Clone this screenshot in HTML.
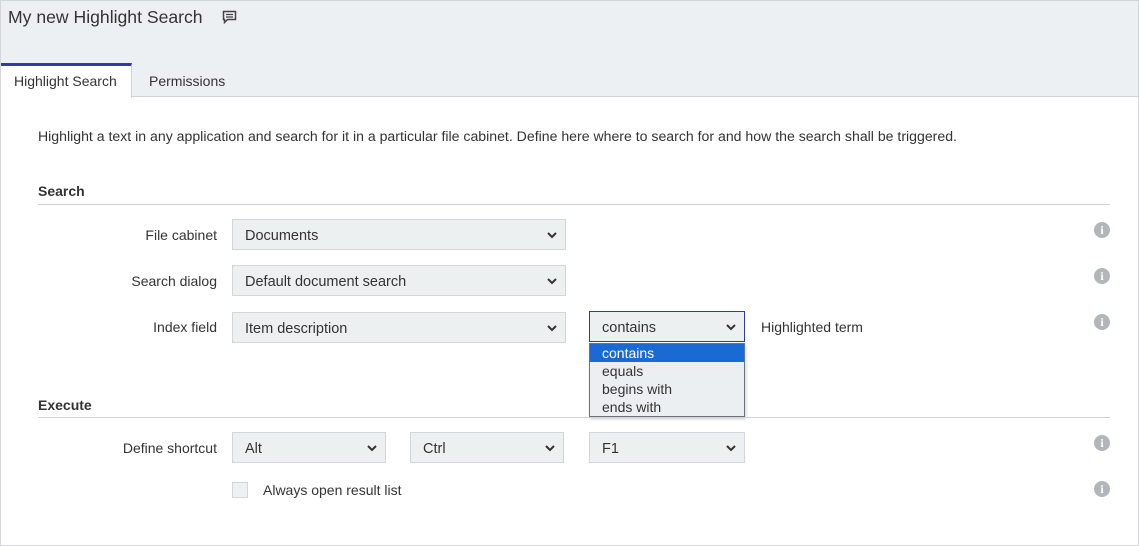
<!DOCTYPE html>
<html><head><style>
*{box-sizing:border-box;margin:0;padding:0}
body{width:1139px;height:546px;font-family:"Liberation Sans",sans-serif;font-size:14px;color:#333;background:#fff;position:relative;overflow:hidden}
.a{position:absolute}
.frame{left:0;top:0;width:1139px;height:546px;border:1px solid #d4d7da}
.hdr{left:1px;top:1px;width:1137px;height:96px;background:#edf0f2;border-bottom:1px solid #d0d4d8}
.sel{position:absolute;background:#edf0f1;border:1px solid #d2d6da;height:31px;padding-left:12px;line-height:33px;font-size:14.5px;color:#333}
.sel svg{position:absolute;right:8px;top:12px}
.lbl{position:absolute;text-align:right;width:217px;left:0;font-size:14px}
.info{position:absolute;left:1094px;width:16px;height:16px;border-radius:50%;background:#b2b6ba;color:#fff;font-weight:bold;font-size:12px;text-align:center;line-height:16px;font-family:"Liberation Serif",serif}
.line{position:absolute;left:38px;width:1072px;height:1px;background:#cfd3d6}
.h{position:absolute;left:38px;font-weight:bold;font-size:14px;color:#333}
</style></head><body>
<div class="a frame"></div>
<div class="a hdr"></div>
<div class="a" style="left:8px;top:7px;font-size:17.6px;color:#333">My new Highlight Search</div>
<svg class="a" style="left:222px;top:10px" width="16" height="14" viewBox="0 0 16 14"><path d="M1.5 1.5h12v8h-8l-3 3v-3h-1z" fill="none" stroke="#444" stroke-width="1.5"/><path d="M4 4.5h7M4 7h7" stroke="#444" stroke-width="1.2"/></svg>
<div class="a" style="left:1px;top:63px;width:131px;height:35px;background:#fff;border-top:3px solid #3438ad;border-right:1px solid #d0d4d8"></div>
<div class="a" style="left:14px;top:73px">Highlight Search</div>
<div class="a" style="left:149px;top:73px">Permissions</div>
<div class="a" style="left:38px;top:128px;font-size:14.1px">Highlight a text in any application and search for it in a particular file cabinet. Define here where to search for and how the search shall be triggered.</div>
<div class="h" style="top:183px">Search</div><div class="line" style="top:204px"></div>
<div class="lbl" style="top:227px">File cabinet</div>
<div class="sel" style="left:232px;top:219px;width:334px">Documents<svg width="10" height="7"><path d="M1 1l4 4 4-4" fill="none" stroke="#333" stroke-width="2"/></svg></div>
<div class="info" style="top:222px">i</div>
<div class="lbl" style="top:273px">Search dialog</div>
<div class="sel" style="left:232px;top:265px;width:334px">Default document search<svg width="10" height="7"><path d="M1 1l4 4 4-4" fill="none" stroke="#333" stroke-width="2"/></svg></div>
<div class="info" style="top:268px">i</div>
<div class="lbl" style="top:319px">Index field</div>
<div class="sel" style="left:232px;top:312px;width:334px">Item description<svg width="10" height="7"><path d="M1 1l4 4 4-4" fill="none" stroke="#333" stroke-width="2"/></svg></div>
<div class="sel" style="left:589px;top:311px;width:156px;border-color:#2f3aa8">contains<svg width="10" height="7"><path d="M1 1l4 4 4-4" fill="none" stroke="#333" stroke-width="2"/></svg></div>
<div class="a" style="left:761px;top:319px">Highlighted term</div>
<div class="info" style="top:314px">i</div>
<div class="a" style="left:589px;top:343px;width:156px;height:74px;background:#eceff1;border:1px solid #6f7378;box-shadow:1px 2px 3px rgba(0,0,0,.2);font-size:14px;line-height:18px">
<div style="background:#1a6ad4;color:#fff;padding-left:12px">contains</div>
<div style="padding-left:12px">equals</div><div style="padding-left:12px">begins with</div><div style="padding-left:12px">ends with</div></div>
<div class="h" style="top:397px">Execute</div><div class="line" style="top:417px"></div>
<div class="lbl" style="top:440px">Define shortcut</div>
<div class="sel" style="left:232px;top:432px;width:154px">Alt<svg width="10" height="7"><path d="M1 1l4 4 4-4" fill="none" stroke="#333" stroke-width="2"/></svg></div>
<div class="sel" style="left:410px;top:432px;width:154px">Ctrl<svg width="10" height="7"><path d="M1 1l4 4 4-4" fill="none" stroke="#333" stroke-width="2"/></svg></div>
<div class="sel" style="left:589px;top:432px;width:156px">F1<svg width="10" height="7"><path d="M1 1l4 4 4-4" fill="none" stroke="#333" stroke-width="2"/></svg></div>
<div class="info" style="top:435px">i</div>
<div class="a" style="left:232px;top:482px;width:16px;height:16px;background:#eef0f1;border:1px solid #d2d6da"></div>
<div class="a" style="left:263px;top:482px">Always open result list</div>
<div class="info" style="top:481px">i</div>
</body></html>
